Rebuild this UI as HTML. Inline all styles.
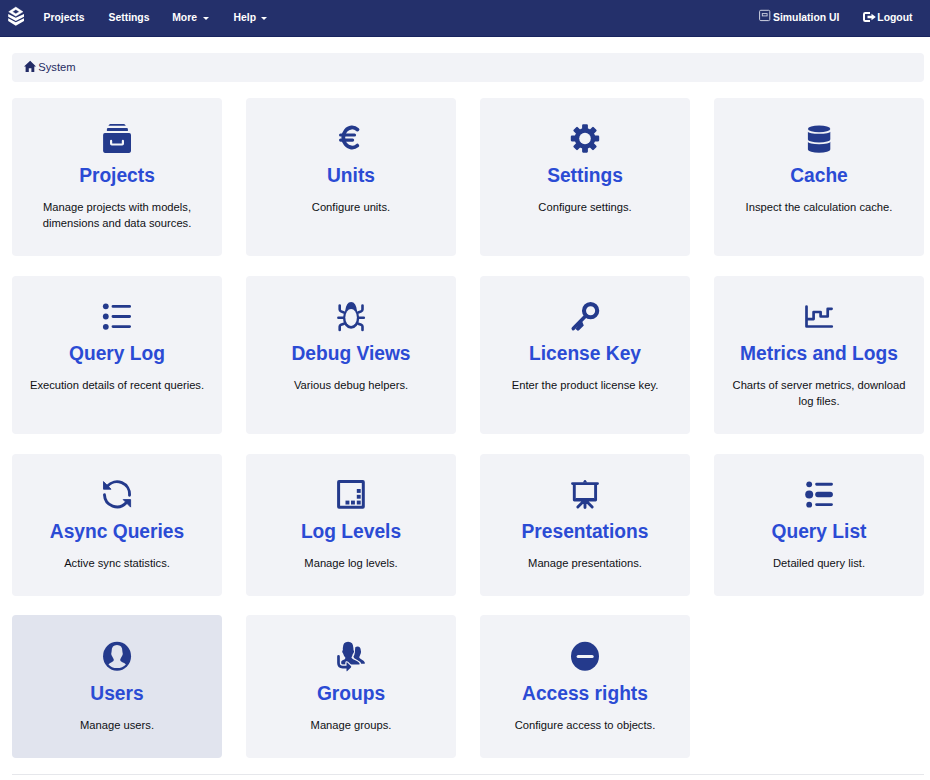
<!DOCTYPE html>
<html>
<head>
<meta charset="utf-8">
<style>
html,body{margin:0;padding:0;background:#fff;width:930px;height:780px;overflow:hidden;position:relative;font-family:"Liberation Sans",sans-serif;}
.nav{position:absolute;left:0;top:0;width:930px;height:36px;background:#24306b;border-bottom:1px solid #18245e;}
.nt{position:absolute;top:0;height:36px;line-height:36px;color:#fff;font-weight:bold;font-size:10.4px;white-space:nowrap;}
.caret{position:absolute;top:17px;width:0;height:0;border-top:3px solid #fff;border-left:3px solid transparent;border-right:3px solid transparent;}
.bc{position:absolute;left:12px;top:53px;width:912px;height:29px;background:#f2f3f7;border-radius:4px;}
.bct{position:absolute;left:26.3px;top:0;line-height:29px;font-size:11.2px;color:#252b62;}
.card{position:absolute;width:210px;background:#f2f3f7;border-radius:4px;}
.card svg{position:absolute;width:60px;height:50px;}
.ti{position:absolute;top:66px;left:0;width:210px;text-align:center;font-weight:bold;font-size:19.2px;line-height:23px;color:#2b4bd4;white-space:nowrap;transform:scaleY(1.04);transform-origin:50% 18px;}
.de{position:absolute;top:101px;left:0;width:210px;text-align:center;font-size:11.2px;line-height:16px;color:#0f1014;white-space:nowrap;}
.r0{top:98px;height:158px}.r1{top:276px;height:158px}.r2{top:454px;height:142px}.r3{top:615px;height:143px}.r3 .ti{top:67px}.r3 .de{top:102px}
.c0{left:12px}.c1{left:246px}.c2{left:480px}.c3{left:714px}
.hr{position:absolute;left:12px;top:774px;width:912px;height:1px;background:#e6e7eb;}
</style>
</head>
<body>
<div class="nav">
  <svg style="position:absolute;left:0;top:0" width="32" height="36" viewBox="0 0 32 36">
    <path fill="#fff" fill-rule="evenodd" stroke="#fff" stroke-width="0.4" stroke-linejoin="round" d="M15.8,7 L23,11.8 L15.8,16.2 L8.7,11.8 Z M15.8,9.5 L19.3,11.7 L15.8,13.8 L12.5,11.7 Z"/>
    <path fill="#fff" d="M8.2,14 L15.8,17.8 L24,14 L24,16.8 L15.8,21 L8.2,16.8 Z"/>
    <path fill="#fff" d="M8.2,18.3 L15.8,22.3 L24,18.3 L24,21.1 L15.8,25.7 L8.2,21.1 Z"/>
  </svg>
  <div class="nt" style="left:43.5px">Projects</div>
  <div class="nt" style="left:108.5px">Settings</div>
  <div class="nt" style="left:172.2px">More</div>
  <div class="caret" style="left:203px"></div>
  <div class="nt" style="left:233.5px">Help</div>
  <div class="caret" style="left:261px"></div>
  <svg style="position:absolute;left:755px;top:6px" width="20" height="20" viewBox="0 0 20 20">
    <rect x="4.6" y="4.3" width="10.2" height="10.3" rx="1.2" fill="none" stroke="#d0d3e2" stroke-width="1"/>
    <rect x="7.3" y="7.6" width="4.8" height="2.3" fill="none" stroke="#d0d3e2" stroke-width="0.9"/>
  </svg>
  <div class="nt" style="left:773px">Simulation UI</div>
  <svg style="position:absolute;left:860px;top:8px" width="20" height="20" viewBox="0 0 20 20">
    <path fill="none" stroke="#fff" stroke-width="2" d="M10,5 H5.2 Q4,5 4,6.2 V11.8 Q4,13 5.2,13 H10"/>
    <path fill="#fff" d="M7.5,7.8 H11.5 V5.8 L15.8,9 L11.5,12.2 V10.2 H7.5 Z"/>
  </svg>
  <div class="nt" style="left:877.3px">Logout</div>
</div>

<div class="bc">
  <svg style="position:absolute;left:0;top:0" width="26" height="29" viewBox="0 0 26 29">
    <path fill="#222b66" d="M18.2,7.8 L24,13.6 H22.3 V18.9 H19.4 V15.3 H16.8 V18.9 H13.6 V13.6 H12 Z"/>
  </svg>
  <div class="bct">System</div>
</div>

<!-- CARDS -->
<div class="card r0 c0"><svg style="left:78px;top:17px" viewBox="0 0 60 50"><path fill="#243a8c" d="M18.4,10.7 L19.3,9.4 Q19.6,9 20.2,9 H34 Q34.6,9 34.9,9.4 L35.8,10.7 Z"/>
<path fill="#243a8c" d="M16.9,16.1 V14.1 Q16.9,12.9 18.1,12.9 H36.7 Q37.9,12.9 37.9,14.1 V16.1 Z"/>
<path fill="#243a8c" fill-rule="evenodd" d="M14.9,18.1 H39.2 Q41,18.1 41,19.9 V36.1 Q41,37.9 39.2,37.9 H14.9 Q13.1,37.9 13.1,36.1 V19.9 Q13.1,18.1 14.9,18.1 Z M20,25.9 Q20,24.8 21.1,24.8 Q22.2,24.8 22.2,25.9 V28.4 H31.8 V25.9 Q31.8,24.8 32.9,24.8 Q34,24.8 34,25.9 V28.8 Q34,30.6 32.2,30.6 H21.8 Q20,30.6 20,28.8 Z"/></svg><div class="ti">Projects</div><div class="de">Manage projects with models,<br>dimensions and data sources.</div></div>
<div class="card r0 c1"><svg style="left:74px;top:17px" viewBox="0 0 60 50"><path fill="none" stroke="#243a8c" stroke-width="3.8" stroke-linecap="round" d="M37.5,14.6 A8.8,10.05 0 1 0 37.3,30.6"/>
<path fill="none" stroke="#243a8c" stroke-width="3.2" stroke-linecap="round" d="M20.6,20 H34.5 M20.6,25.1 H32.6"/></svg><div class="ti">Units</div><div class="de">Configure units.</div></div>
<div class="card r0 c2"><svg style="left:75px;top:17px" viewBox="0 0 60 50"><g fill="#243a8c"><rect x="27.1" y="9.3" width="5.8" height="8" rx="1.1" transform="rotate(0 30 23.5)"/><rect x="27.1" y="9.3" width="5.8" height="8" rx="1.1" transform="rotate(45 30 23.5)"/><rect x="27.1" y="9.3" width="5.8" height="8" rx="1.1" transform="rotate(90 30 23.5)"/><rect x="27.1" y="9.3" width="5.8" height="8" rx="1.1" transform="rotate(135 30 23.5)"/><rect x="27.1" y="9.3" width="5.8" height="8" rx="1.1" transform="rotate(180 30 23.5)"/><rect x="27.1" y="9.3" width="5.8" height="8" rx="1.1" transform="rotate(225 30 23.5)"/><rect x="27.1" y="9.3" width="5.8" height="8" rx="1.1" transform="rotate(270 30 23.5)"/><rect x="27.1" y="9.3" width="5.8" height="8" rx="1.1" transform="rotate(315 30 23.5)"/><circle cx="30" cy="23.5" r="10.4"/></g><circle cx="30" cy="23.5" r="5.8" fill="#f2f3f7"/></svg><div class="ti">Settings</div><div class="de">Configure settings.</div></div>
<div class="card r0 c3"><svg style="left:76px;top:17px" viewBox="0 0 60 50"><g fill="#243a8c"><ellipse cx="29.1" cy="13.9" rx="11.2" ry="3.4"/>
<path d="M17.9,16.8 A11.2,2.0 0 0 0 40.3,16.8 V24.4 A11.2,3.1 0 0 1 17.9,24.4 Z"/>
<path d="M17.9,26.8 A11.2,2.4 0 0 0 40.3,26.8 V34.5 A11.2,3.2 0 0 1 17.9,34.5 Z"/></g></svg><div class="ti">Cache</div><div class="de">Inspect the calculation cache.</div></div>
<div class="card r1 c0"><svg style="left:78px;top:17px" viewBox="0 0 60 50"><g fill="#243a8c"><circle cx="15.8" cy="13.3" r="2.9"/><circle cx="15.8" cy="23.5" r="2.9"/><circle cx="15.8" cy="33.8" r="2.9"/></g>
<path stroke="#243a8c" stroke-width="2.9" stroke-linecap="round" d="M23,13.4 H39.6 M23,23.5 H39.6 M23,33.6 H39.6"/></svg><div class="ti">Query Log</div><div class="de">Execution details of recent queries.</div></div>
<div class="card r1 c1"><svg style="left:74px;top:17px" viewBox="0 0 60 50"><ellipse cx="31.1" cy="25.2" rx="8.1" ry="10.6" fill="#243a8c"/>
<path fill="#243a8c" d="M25.2,18 Q26.2,9 31.1,9 Q36,9 37,18 Z"/>
<ellipse cx="31.1" cy="24.4" rx="5.8" ry="8.5" fill="#f2f3f7"/>
<path fill="none" stroke="#243a8c" stroke-width="2.6" stroke-linecap="round" stroke-linejoin="round" d="M19.7,12.5 V16.6 Q19.7,17.9 21,18.4 L24,19.5 M42.5,12.5 V16.6 Q42.5,17.9 41.2,18.4 L38.2,19.5 M18.4,24.8 H23.5 M43.8,24.8 H38.7 M24,30.7 L21,31.8 Q19.7,32.3 19.7,33.6 V36.9 M38.2,30.7 L41.2,31.8 Q42.5,32.3 42.5,33.6 V36.9"/></svg><div class="ti">Debug Views</div><div class="de">Various debug helpers.</div></div>
<div class="card r1 c2"><svg style="left:75px;top:17px" viewBox="0 0 60 50"><circle cx="35.6" cy="17.7" r="6.6" fill="none" stroke="#243a8c" stroke-width="4.1"/>
<path fill="none" stroke="#243a8c" stroke-width="3.6" stroke-linecap="round" d="M30.8,22.8 L18.3,35.6"/>
<path fill="#243a8c" d="M26.6,27 L28.8,32.4 L24,37.2 Q23.2,38 22.4,37.4 L20.6,36 Z"/></svg><div class="ti">License Key</div><div class="de">Enter the product license key.</div></div>
<div class="card r1 c3"><svg style="left:76px;top:17px" viewBox="0 0 60 50"><path fill="none" stroke="#243a8c" stroke-width="2.7" stroke-linecap="round" stroke-linejoin="round" d="M16.5,13.6 V33.5 H41.8 M17.4,26.1 H23.6 V19 H30.6 V23.5 H37.7 V15.8 H41.6"/></svg><div class="ti">Metrics and Logs</div><div class="de">Charts of server metrics, download<br>log files.</div></div>
<div class="card r2 c0"><svg style="left:78px;top:16px" viewBox="0 0 60 50"><path fill="none" stroke="#243a8c" stroke-width="2.9" stroke-linecap="round" d="M17.53,16.07 A12.55,12.55 0 0 1 39.52,25.18 M14.46,24.74 A12.55,12.55 0 0 0 36.22,32.81"/>
<path fill="#243a8c" stroke="#243a8c" stroke-width="0.9" stroke-linejoin="round" d="M13.5,11.6 L21,19.2 H13.5 Z M40.6,29.6 V37.1 L33.2,29.6 Z"/></svg><div class="ti">Async Queries</div><div class="de">Active sync statistics.</div></div>
<div class="card r2 c1"><svg style="left:74px;top:16px" viewBox="0 0 60 50"><rect x="18.6" y="11.5" width="24.7" height="25.7" rx="0.4" fill="none" stroke="#243a8c" stroke-width="3"/>
<g fill="#243a8c"><rect x="25.5" y="30.6" width="3.9" height="3.9"/><rect x="31" y="30.6" width="3.9" height="3.9"/><rect x="36.8" y="30.6" width="3.9" height="3.9"/><rect x="36.8" y="24.8" width="3.9" height="3.9"/><rect x="36.8" y="19" width="3.9" height="3.9"/></g></svg><div class="ti">Log Levels</div><div class="de">Manage log levels.</div></div>
<div class="card r2 c2"><svg style="left:75px;top:16px" viewBox="0 0 60 50"><path fill="none" stroke="#243a8c" stroke-width="2.9" stroke-linecap="round" stroke-linejoin="round" d="M17.5,13.6 H42.5 M19.3,13.6 V30.1 H40.6 V13.6 M30,31 V37.6 M28.6,31.2 L22.8,37 M31.4,31.2 L37.2,37"/>
<path fill="#243a8c" d="M27.8,12.6 L29.2,10.3 Q30,9.5 30.8,10.3 L32.2,12.6 Z"/><rect x="20.6" y="28" width="18.6" height="2" fill="#243a8c"/></svg><div class="ti">Presentations</div><div class="de">Manage presentations.</div></div>
<div class="card r2 c3"><svg style="left:76px;top:16px" viewBox="0 0 60 50"><g fill="#243a8c"><circle cx="19.2" cy="14.3" r="2.9"/><circle cx="19.2" cy="24.5" r="4"/><circle cx="19.2" cy="34.7" r="2.9"/></g>
<path stroke="#243a8c" stroke-width="2.9" stroke-linecap="round" d="M26.6,14.3 H41.5 M26.6,34.6 H41.5"/>
<path stroke="#243a8c" stroke-width="5.4" stroke-linecap="round" d="M27.9,24.5 H40.2"/></svg><div class="ti">Query List</div><div class="de">Detailed query list.</div></div>
<div class="card r3 c0" style="background:#e1e4ee"><svg style="left:78px;top:17px" viewBox="0 0 60 50"><ellipse cx="27.05" cy="24.25" rx="14" ry="14.4" fill="#243a8c"/>
<path fill="#e1e4ee" d="M27,13 Q32.4,13 32.4,19.4 Q32.6,20.4 32.8,21.9 Q32.4,23.6 31.6,24.8 Q30.5,26.6 30.1,28 Q30.4,29.2 32.4,30.2 Q35,31.2 35.9,32.4 Q32.6,36.1 27,36.1 Q21.4,36.1 18.5,32.4 Q19.4,31.2 21.6,30.2 Q23.6,29.2 23.9,28 Q23.5,26.6 22.4,24.8 Q21.6,23.6 21.2,21.9 Q21.4,20.4 21.6,19.4 Q21.6,13 27,13 Z"/></svg><div class="ti">Users</div><div class="de">Manage users.</div></div>
<div class="card r3 c1"><svg style="left:74px;top:17px" viewBox="0 0 60 50"><path fill="#243a8c" d="M35.3,15.2 Q36.2,14.6 37.6,14.6 Q40.6,14.8 40.8,18.6 Q41.2,19.4 40.9,21.1 Q40.4,22.6 39.2,25.2 Q39.4,26.2 41.2,27.3 Q44.6,29 45,31 Q45,31.8 44.2,31.8 H41.2 Q40.4,29.6 36.4,27.6 Q33.6,26.4 33.4,24.8 Q34.6,22.6 34.8,20.4 Q35,17.6 35.3,15.2 Z"/>
<path fill="#243a8c" stroke="#f2f3f7" stroke-width="1.5" stroke-linejoin="round" paint-order="stroke" d="M28.1,9.8 Q33.3,9.8 33.4,16.2 L33.5,18.3 Q34.4,18.7 34,20 Q33.4,21.4 32.8,22 Q32.2,24.4 31.4,25.6 Q31.8,26.8 33.6,27.6 Q38.6,29.6 39.6,31.4 Q39.8,32.6 38.6,32.6 H22.4 Q21.2,32.6 21.2,31.4 V30 Q21.2,28.8 22.6,28.2 L24.8,27.2 Q25.6,26.4 25.3,25.6 Q23.6,23.4 23.1,21.4 Q22.2,20.8 22.2,19.2 Q22.4,18.3 22.9,18.2 L22.8,16.2 Q22.9,9.8 28.1,9.8 Z"/>
<path fill="none" stroke="#f2f3f7" stroke-width="4.9" stroke-linecap="round" d="M18.5,24.4 V31 Q18.5,35.1 22.6,35.1 H27.5"/>
<path fill="#f2f3f7" stroke="#f2f3f7" stroke-width="2.4" stroke-linejoin="round" d="M26.5,30.9 Q26.5,30 27.3,30.6 L30.9,34 Q31.6,34.8 30.9,35.6 L27.3,39 Q26.5,39.6 26.5,38.7 Z"/>
<path fill="none" stroke="#243a8c" stroke-width="2.7" stroke-linecap="round" d="M18.5,24.4 V31 Q18.5,35.1 22.6,35.1 H27.5"/>
<path fill="#243a8c" d="M26.5,30.9 Q26.5,30 27.3,30.6 L30.9,34 Q31.6,34.8 30.9,35.6 L27.3,39 Q26.5,39.6 26.5,38.7 Z"/></svg><div class="ti">Groups</div><div class="de">Manage groups.</div></div>
<div class="card r3 c2"><svg style="left:75px;top:17px" viewBox="0 0 60 50"><ellipse cx="30" cy="24.35" rx="14" ry="14.5" fill="#243a8c"/><path stroke="#f2f3f7" stroke-width="3.2" stroke-linecap="round" d="M23.2,24.5 H37.1"/></svg><div class="ti">Access rights</div><div class="de">Configure access to objects.</div></div>
<div class="hr"></div>
</body>
</html>
